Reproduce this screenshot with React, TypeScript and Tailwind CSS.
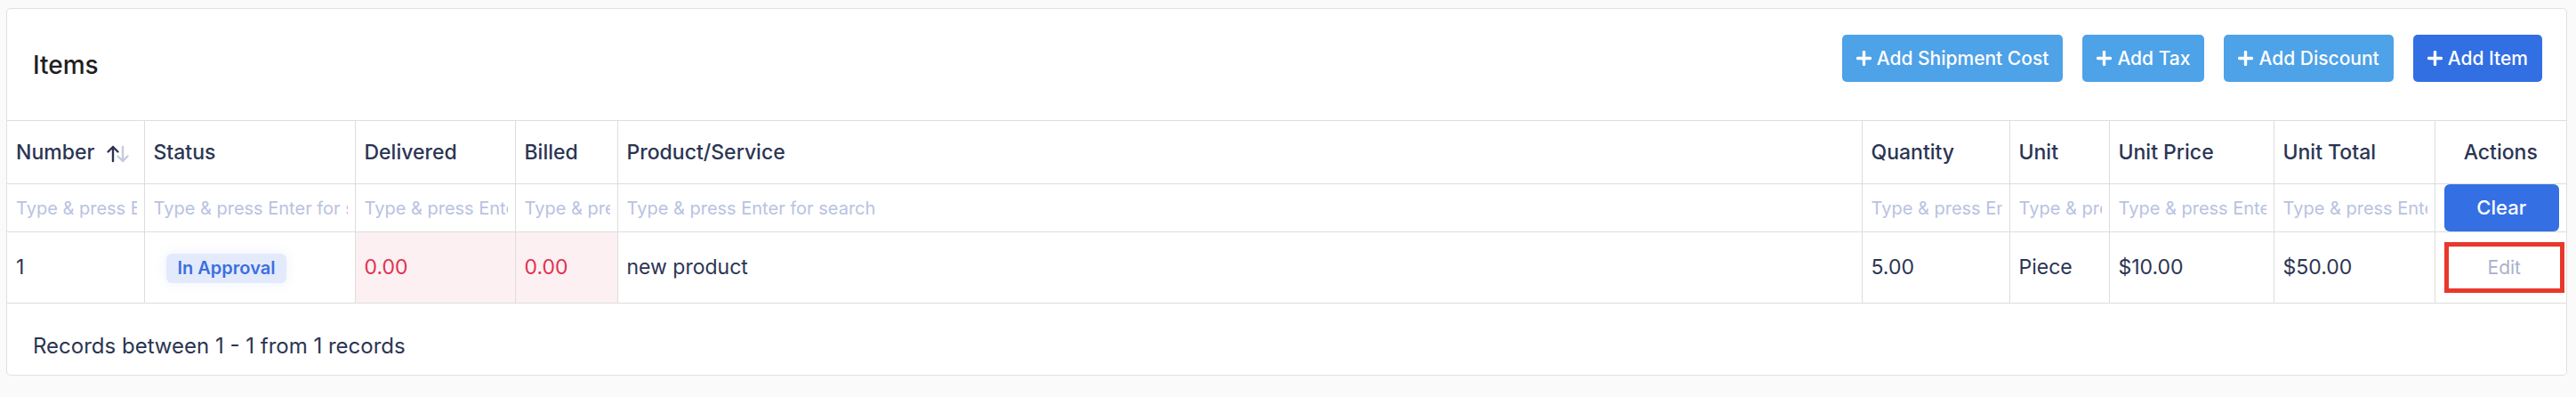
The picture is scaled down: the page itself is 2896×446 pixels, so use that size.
import React from 'react';

const columns = [
  { key: 'number', label: 'Number', width: 'w-[154px]' },
  { key: 'status', label: 'Status', width: 'w-[237px]' },
  { key: 'delivered', label: 'Delivered', width: 'w-[180px]' },
  { key: 'billed', label: 'Billed', width: 'w-[115px]' },
  { key: 'product', label: 'Product/Service', width: '' },
  { key: 'quantity', label: 'Quantity', width: 'w-[166px]' },
  { key: 'unit', label: 'Unit', width: 'w-[112px]' },
  { key: 'unitPrice', label: 'Unit Price', width: 'w-[185px]' },
  { key: 'unitTotal', label: 'Unit Total', width: 'w-[181px]' },
  { key: 'actions', label: 'Actions', width: 'w-[148px]' },
];

const PlusIcon = () => (
  <svg width="17" height="17" viewBox="0 0 18 18" className="shrink-0">
    <path d="M9 1.5v15M1.5 9h15" stroke="white" strokeWidth="3.6" strokeLinecap="round" />
  </svg>
);

const SortIcon = () => (
  <svg width="28" height="20" viewBox="0 0 28 20" className="ml-[13px] mt-[4px] shrink-0">
    <path d="M8 18V2M2.5 7.5L8 2l5.5 5.5" stroke="#2b3553" strokeWidth="2.4" fill="none" strokeLinecap="round" strokeLinejoin="round" />
    <path d="M19 2v16M13.5 12.5L19 18l5.5-5.5" stroke="#c6ccdb" strokeWidth="2.4" fill="none" strokeLinecap="round" strokeLinejoin="round" />
  </svg>
);

const cell = 'border-l border-[#dddddd] first:border-l-0';

const App: React.FC = () => {
  const headerButtons = [
    { label: 'Add Shipment Cost', color: 'bg-[#4ea2e7]' },
    { label: 'Add Tax', color: 'bg-[#4ea2e7]' },
    { label: 'Add Discount', color: 'bg-[#4ea2e7]' },
    { label: 'Add Item', color: 'bg-[#326fe3]' },
  ];

  return (
    <div className="min-h-screen bg-[#fafafa] pt-[9px] pl-[7px] pr-[10px] font-['Inter',sans-serif] text-[#2b3553]">
      <div className="overflow-hidden rounded-[5px] border border-[#e1e1e1] bg-white">
        <div className="flex h-[125px] items-center justify-between pl-[29px] pr-[27px]">
          <h2 className="text-[28px] font-medium text-[#1f1f1f]">Items</h2>
          <div className="mb-[14px] flex gap-[22px]">
            {headerButtons.map((b) => (
              <button
                key={b.label}
                className={`flex h-[53px] items-center gap-[6px] rounded-[5px] px-[16px] text-[21px] font-medium text-white ${b.color}`}
              >
                <PlusIcon />
                {b.label}
              </button>
            ))}
          </div>
        </div>

        <table className="w-full table-fixed border-collapse">
          <colgroup>
            {columns.map((c) => (
              <col key={c.key} className={c.width} />
            ))}
          </colgroup>
          <thead>
            <tr className="h-[71px] border-y border-[#dddddd]">
              {columns.map((c) => (
                <th
                  key={c.key}
                  className={`${cell} px-[10px] text-[23px] font-medium ${c.key === 'actions' ? 'text-center' : 'text-left'}`}
                >
                  {c.key === 'number' ? (
                    <span className="flex items-center">
                      {c.label}
                      <SortIcon />
                    </span>
                  ) : (
                    c.label
                  )}
                </th>
              ))}
            </tr>
            <tr className="h-[53px] border-b border-[#dddddd]">
              {columns.map((c) => (
                <th key={c.key} className={`${cell} ${c.key === 'actions' ? 'pl-[10px] pr-[8px]' : 'pl-[10px] pr-[8px]'} font-normal`}>
                  {c.key === 'actions' ? (
                    <button className="h-[53px] w-full rounded-[6px] bg-[#3470e4] text-[22px] font-medium text-white">
                      Clear
                    </button>
                  ) : (
                    <input
                      className="w-full bg-transparent text-[20px] text-[#2b3553] outline-none placeholder:text-[#b9c2e2]"
                      placeholder="Type & press Enter for search"
                    />
                  )}
                </th>
              ))}
            </tr>
          </thead>
          <tbody>
            <tr className="h-[80px] border-b border-[#dddddd] text-[23px]">
              <td className={`${cell} px-[10px]`}>1</td>
              <td className={`${cell} px-[10px]`}>
                <span className="ml-[14px] inline-flex h-[33px] items-center rounded-[6px] bg-[#e3eafc] px-[13px] text-[20px] font-semibold text-[#3a6fe0] shadow-[0_0_14px_rgba(120,140,220,0.12)]">
                  In Approval
                </span>
              </td>
              <td className={`${cell} bg-[#fcf0f2] px-[10px] text-[#e0334f]`}>0.00</td>
              <td className={`${cell} bg-[#fcf0f2] px-[10px] text-[#e0334f]`}>0.00</td>
              <td className={`${cell} px-[10px]`}>new product</td>
              <td className={`${cell} px-[10px]`}>5.00</td>
              <td className={`${cell} px-[10px]`}>Piece</td>
              <td className={`${cell} px-[10px]`}>$10.00</td>
              <td className={`${cell} px-[10px]`}>$50.00</td>
              <td className={`${cell} pl-[10px] pr-[2px]`}>
                <button className="h-[57px] w-full border-[5px] border-[#e8382c] bg-white text-[21px] text-[#a9b0cc]">
                  Edit
                </button>
              </td>
            </tr>
          </tbody>
        </table>

        <div className="flex h-[80px] items-center pl-[29px] pt-[16px] text-[24px]">
          Records between 1 - 1 from 1 records
        </div>
      </div>
    </div>
  );
};

export default App;
